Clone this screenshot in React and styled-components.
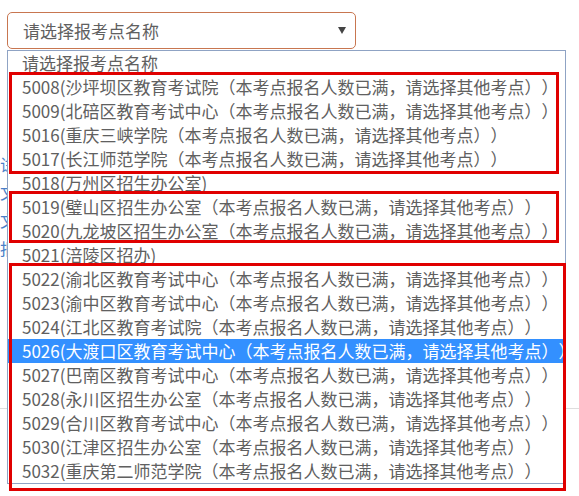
import React from 'react';
import styled, { createGlobalStyle } from 'styled-components';

// exam site picker, shown with the native list open and some hand drawn marks on top

const GlobalStyle = createGlobalStyle`
  html, body {
    margin: 0;
    padding: 0;
    background: #fff;
  }
  body {
    font-family: "Noto Sans CJK SC", "Noto Sans", sans-serif;
  }
`;

const FULL = '（本考点报名人数已满，请选择其他考点））';

const options = [
  { label: '请选择报考点名称' },
  { label: '5008(沙坪坝区教育考试院' + FULL },
  { label: '5009(北碚区教育考试中心' + FULL },
  { label: '5016(重庆三峡学院' + FULL },
  { label: '5017(长江师范学院' + FULL },
  { label: '5018(万州区招生办公室)' },
  { label: '5019(璧山区招生办公室' + FULL },
  { label: '5020(九龙坡区招生办公室' + FULL },
  { label: '5021(涪陵区招办)' },
  { label: '5022(渝北区教育考试中心' + FULL },
  { label: '5023(渝中区教育考试中心' + FULL },
  { label: '5024(江北区教育考试院' + FULL },
  { label: '5026(大渡口区教育考试中心' + FULL, active: true },
  { label: '5027(巴南区教育考试中心' + FULL },
  { label: '5028(永川区招生办公室' + FULL },
  { label: '5029(合川区教育考试中心' + FULL },
  { label: '5030(江津区招生办公室' + FULL },
  { label: '5032(重庆第二师范学院' + FULL },
];

// red marks drawn on the screenshot
const marks = [
  { left: 9, top: 72, width: 550, height: 102 },
  { left: 9, top: 191, width: 550, height: 52 },
  { left: 9, top: 263, width: 557, height: 228 },
];

const links = ['试', '文', '文', '报'];

const Page = styled.div`
  position: relative;
  width: 579px;
  height: 496px;
  overflow: hidden;
`;

const Header = styled.div`
  padding: 12px 7px 0;
`;

const SelectBox = styled.div`
  box-sizing: border-box;
  width: 349px;
  height: 37px;
  border: 1px solid #c87650;
  border-radius: 5px;
  display: flex;
  align-items: center;
  justify-content: space-between;
  padding: 0 8px 0 15px;
  font-size: 17px;
  color: #606060;
`;

const Arrow = styled.span`
  width: 0;
  height: 0;
  border-left: 4px solid transparent;
  border-right: 4px solid transparent;
  border-top: 7px solid #444;
  margin-right: 1px;
`;

const Body = styled.div`
  display: flex;
  flex-direction: column;
  padding-top: 101px;
`;

/* only a sliver of the page links peeks out left of the open list */
const LinkList = styled.div`
  display: flex;
  flex-direction: column;
  width: 7px;
  overflow: hidden;
`;

const LinkItem = styled.a`
  font-size: 16px;
  line-height: 28px;
  color: #4a7fc8;
  text-decoration: none;
  white-space: nowrap;
`;

const Divider = styled.div`
  margin-top: 146px;
  border-top: 1px solid #dedede;
`;

const Dropdown = styled.ul`
  position: absolute;
  top: 50px;
  left: 7px;
  width: 559px;
  box-sizing: border-box;
  margin: 0;
  padding: 0;
  list-style: none;
  background: #fff;
  border: 1px solid #8fa3c4;
`;

const Option = styled.li`
  height: 24px;
  line-height: 24px;
  padding-left: 14px;
  font-size: 17px;
  white-space: nowrap;
  overflow: hidden;
  text-spacing-trim: space-all;
  color: ${p => (p.$active ? '#fff' : '#606060')};
  background: ${p => (p.$active ? '#3390ff' : 'transparent')};
`;

const Mark = styled.div`
  position: absolute;
  box-sizing: border-box;
  border: 3px solid #e00000;
  pointer-events: none;
`;

export default function App() {
  return (
    <Page>
      <GlobalStyle />
      <Header>
        <SelectBox>
          <span>请选择报考点名称</span>
          <Arrow />
        </SelectBox>
      </Header>
      <Body>
        <LinkList>
          {links.map((l, i) => (
            <LinkItem key={i} href="#">{l}</LinkItem>
          ))}
        </LinkList>
        <Divider />
      </Body>
      <Dropdown>
        {options.map(o => (
          <Option key={o.label} $active={o.active}>{o.label}</Option>
        ))}
      </Dropdown>
      {marks.map((m, i) => (
        <Mark key={i} style={{ left: m.left, top: m.top, width: m.width, height: m.height }} />
      ))}
    </Page>
  );
}
